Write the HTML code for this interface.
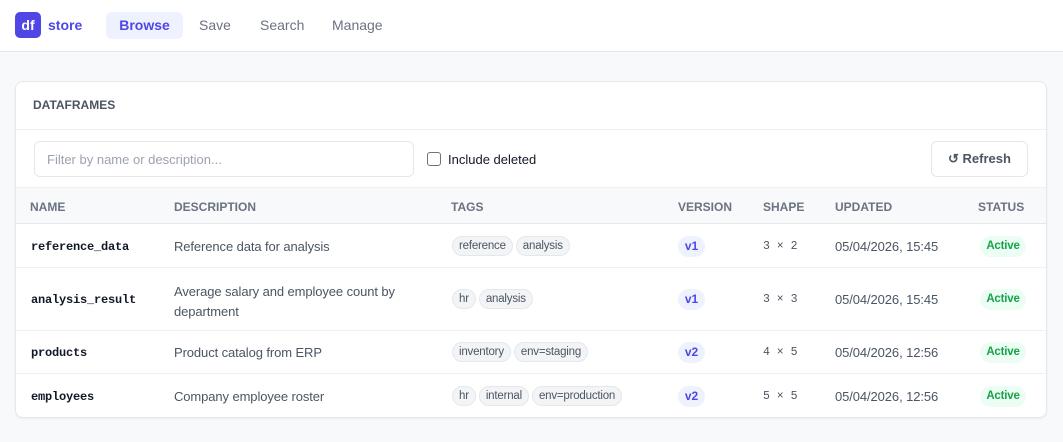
<!DOCTYPE html>
<html><head><style>
*{box-sizing:border-box;margin:0;padding:0}
body{width:1063px;height:442px;background:#f8f9fb;font-family:"Liberation Sans",sans-serif;overflow:hidden;position:relative;color:#374151}
.hdr{position:absolute;left:0;top:0;width:1063px;height:52px;background:#fff;border-bottom:1px solid #e5e7eb}
.logo{position:absolute;left:15px;top:12px;width:26px;height:26px;border-radius:5px;background:#4f46e5;color:#fff;font-weight:bold;font-size:14px;text-align:center;line-height:26px}
.brand{position:absolute;left:48px;top:17px;font-size:14px;font-weight:bold;color:#4f46e5}
.nav{position:absolute;top:12px;height:27px;line-height:27px;font-size:14px;color:#6b7280}
.card{position:absolute;left:15px;top:81px;width:1032px;height:337px;background:#fff;border:1px solid #e5e7eb;border-radius:8px;overflow:hidden;box-shadow:0 1px 2px rgba(0,0,0,.05)}
.t{position:absolute;font-size:13px;white-space:nowrap}
.d{color:#4b5563;letter-spacing:-0.1px}
.th{position:absolute;top:118px;font-size:12px;font-weight:bold;color:#6b7280}
.line{position:absolute;left:0;width:1032px;height:1px;background:#eef0f3}
.tag{display:inline-block;height:20px;line-height:18px;padding:0 6px;border:1px solid #e5e7eb;background:#f3f4f6;border-radius:10px;font-size:11.5px;color:#4b5563;margin-right:3px;letter-spacing:-0.2px}
.ver{position:absolute;left:662px;width:27px;height:21px;line-height:21px;text-align:center;border-radius:11px;background:#eef2ff;color:#4f46e5;font-size:12px;font-weight:bold}
.act{position:absolute;left:964px;width:46px;height:21px;line-height:21px;text-align:center;border-radius:11px;background:#ecfdf3;color:#16a34a;font-size:11.5px;font-weight:bold;letter-spacing:-0.2px}
.mono{font-family:"Liberation Mono",monospace;font-weight:bold;font-size:12px;color:#111827;letter-spacing:-0.2px}
.shape{font-family:"Liberation Mono",monospace;font-size:11.5px;color:#4b5563}
</style></head><body>
<div class="hdr">
<div class="logo">df</div><div class="brand">store</div>
<div class="nav" style="left:106px;width:77px;background:#eef2ff;border-radius:6px;color:#4f46e5;font-weight:bold;text-align:center">Browse</div>
<div class="nav" style="left:199px">Save</div>
<div class="nav" style="left:260px">Search</div>
<div class="nav" style="left:332px">Manage</div>
</div>
<div class="card">
<div class="t" style="left:17px;top:16px;font-size:12px;font-weight:bold;color:#4b5563">DATAFRAMES</div>
<div class="line" style="top:47px"></div>
<div style="position:absolute;left:18px;top:59px;width:380px;height:36px;border:1px solid #e5e7eb;border-radius:6px"></div>
<div class="t" style="left:31px;top:70px;color:#9ca3af">Filter by name or description...</div>
<div style="position:absolute;left:411px;top:70px;width:14px;height:14px;border:1px solid #6b7280;border-radius:3px"></div>
<div class="t" style="left:432px;top:70px;color:#111827">Include deleted</div>
<div style="position:absolute;left:915px;top:59px;width:97px;height:36px;border:1px solid #e5e7eb;border-radius:6px;text-align:center;line-height:34px;font-size:13px;font-weight:bold;color:#4b5563">↺ Refresh</div>
<div style="position:absolute;left:0;top:105px;width:1032px;height:37px;background:#f8f9fb;border-top:1px solid #eef0f3;border-bottom:1px solid #e5e7eb"></div>
<div class="th" style="left:14px">NAME</div><div class="th" style="left:158px">DESCRIPTION</div><div class="th" style="left:435px">TAGS</div><div class="th" style="left:662px">VERSION</div><div class="th" style="left:747px">SHAPE</div><div class="th" style="left:819px">UPDATED</div><div class="th" style="left:962px">STATUS</div>

<div class="t mono" style="left:15px;top:158px">reference_data</div>
<div class="t d" style="left:158px;top:157px">Reference data for analysis</div>
<div class="t" style="left:436px;top:154px"><span class="tag">reference</span><span class="tag">analysis</span></div>
<div class="ver" style="top:154px">v1</div><div class="t shape" style="left:747px;top:158px">3 × 2</div>
<div class="t d" style="left:819px;top:157px">05/04/2026, 15:45</div><div class="act" style="top:154px">Active</div>
<div class="line" style="top:185px"></div>

<div class="t mono" style="left:15px;top:211px">analysis_result</div>
<div class="t d" style="left:158px;top:200px;line-height:20px">Average salary and employee count by<br>department</div>
<div class="t" style="left:436px;top:207px"><span class="tag">hr</span><span class="tag">analysis</span></div>
<div class="ver" style="top:207px">v1</div><div class="t shape" style="left:747px;top:211px">3 × 3</div>
<div class="t d" style="left:819px;top:210px">05/04/2026, 15:45</div><div class="act" style="top:207px">Active</div>
<div class="line" style="top:248px"></div>

<div class="t mono" style="left:15px;top:264px">products</div>
<div class="t d" style="left:158px;top:263px">Product catalog from ERP</div>
<div class="t" style="left:436px;top:260px"><span class="tag">inventory</span><span class="tag">env=staging</span></div>
<div class="ver" style="top:260px">v2</div><div class="t shape" style="left:747px;top:264px">4 × 5</div>
<div class="t d" style="left:819px;top:263px">05/04/2026, 12:56</div><div class="act" style="top:260px">Active</div>
<div class="line" style="top:291px"></div>

<div class="t mono" style="left:15px;top:308px">employees</div>
<div class="t d" style="left:158px;top:307px">Company employee roster</div>
<div class="t" style="left:436px;top:304px"><span class="tag">hr</span><span class="tag">internal</span><span class="tag">env=production</span></div>
<div class="ver" style="top:304px">v2</div><div class="t shape" style="left:747px;top:308px">5 × 5</div>
<div class="t d" style="left:819px;top:307px">05/04/2026, 12:56</div><div class="act" style="top:304px">Active</div>
</div>
</body></html>
